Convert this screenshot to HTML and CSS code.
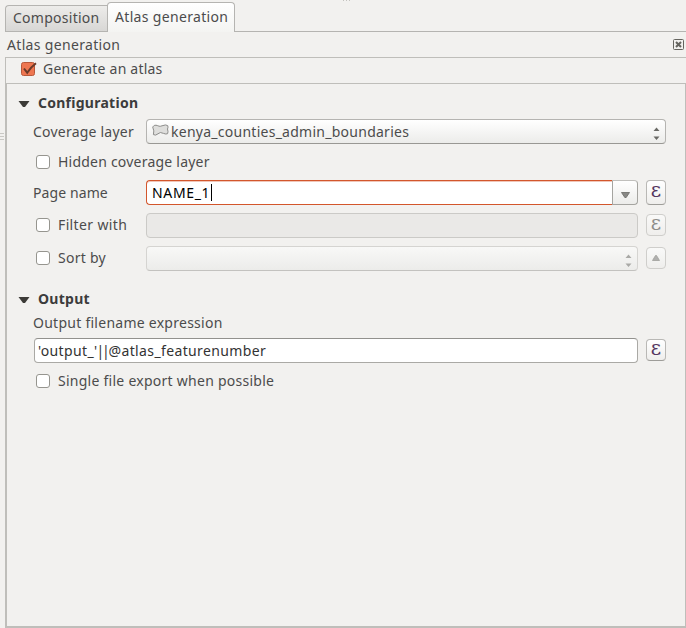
FILE: index.html
```
<!DOCTYPE html>
<html lang="en">
<head>
<meta charset="utf-8">
<title>Atlas generation</title>
<link rel="stylesheet" href="styles.css">
</head>
<body>
<div class="window">
  <i class="grip grip-top"></i>
  <i class="grip grip-left"></i>
  <nav class="tabs">
    <div class="tab"><span>Composition</span></div>
    <div class="tab active"><span class="t-atlas">Atlas generation</span></div>
  </nav>
  <header class="dock-title">
    <span class="t-atlas">Atlas generation</span>
    <svg class="close" width="11" height="11" viewBox="0 0 11 11"><rect x=".5" y=".5" width="10" height="10" rx="1" fill="none" stroke="#65645f"/><path d="M3 3l5 5M8 3l-5 5" stroke="#65645f" stroke-width="2"/></svg>
  </header>
  <div class="generate">
    <svg width="17" height="16" viewBox="0 0 17 16"><rect x="1.5" y="1.5" width="13" height="13" rx="2" fill="#ee7650" stroke="#b8583a"/><path d="M4 7.5l3.2 4.2Q10.5 6.5 16 2.3" fill="none" stroke="#6b3a29" stroke-width="2"/></svg>
    <span class="t-gen">Generate an atlas</span>
  </div>
  <main class="panel">
    <h2><svg width="12" height="8" viewBox="0 0 12 8"><path d="M.5 1h11L7 7H5z" fill="#3c3b37"/></svg><span>Configuration</span></h2>
    <div class="row coverage">
      <label class="t-cov">Coverage layer</label>
      <div class="combo">
        <svg class="poly" width="17" height="13" viewBox="0 0 17 13"><path d="M.7 3Q2 .8 4 1.2C7 1.8 7 3 10 1.8Q14 .2 15.7 1.6Q16.5 3 15.5 5Q16.5 8 15.6 9.7Q14 10.5 11.5 9.4Q8 7.4 6 9.8Q3.5 12 1.4 10.6Q2.6 7 .7 3z" fill="#dededc" stroke="#8d8d8b"/></svg>
        <span>kenya_counties_admin_boundaries</span>
        <svg class="spin" width="7" height="13" viewBox="0 0 7 13"><path d="M.5 4L3.5.5l3 3.5zM.5 9.5h6L3.5 13z" fill="#696965"/></svg>
      </div>
    </div>
    <div class="check hidden-layer"><i class="box"></i><span class="t-hidden">Hidden coverage layer</span></div>
    <div class="row page">
      <label class="t-page">Page name</label>
      <div class="edit-combo">
        <div class="entry"><span class="t-name">NAME_1</span><i class="caret"></i></div>
        <div class="drop"><svg width="9" height="6" viewBox="0 0 9 6"><path d="M.5.5h8L5.2 5.5H3.8z" fill="#888885" stroke="#696965" stroke-width=".8"/></svg></div>
      </div>
      <div class="button tall"><span class="eps">ε</span></div>
    </div>
    <div class="row filter">
      <div class="check"><i class="box"></i><span class="t-filter">Filter with</span></div>
      <div class="input off"></div>
      <div class="button off"><span class="eps">ε</span></div>
    </div>
    <div class="row sort">
      <div class="check"><i class="box"></i><span>Sort by</span></div>
      <div class="combo off"><svg class="spin" width="7" height="13" viewBox="0 0 7 13"><path d="M.5 4L3.5.5l3 3.5zM.5 9.5h6L3.5 13z" fill="#a9a9a6"/></svg></div>
      <div class="button off"><svg width="8" height="6" viewBox="0 0 8 6"><path d="M.5 5.5L3.5.5h1l3 5z" fill="#b0b0ae" stroke="#a09f9c" stroke-width=".8"/></svg></div>
    </div>
    <h2 class="output"><svg width="12" height="8" viewBox="0 0 12 8"><path d="M.5 1h11L7 7H5z" fill="#3c3b37"/></svg><span>Output</span></h2>
    <div class="caption">Output filename expression</div>
    <div class="row filename">
      <div class="input"><span class="t-file">'output_'<span class="pipes">||</span>@atlas_featurenumber</span></div>
      <div class="button"><span class="eps">ε</span></div>
    </div>
    <div class="check single"><i class="box"></i><span>Single file export when possible</span></div>
  </main>
</div>
</body>
</html>
```
FILE: styles.css
```
* { box-sizing: border-box; }
body {
  margin: 0;
  background: #f2f1ef;
  color: #4c4c4c;
  font: 14px/20px "Noto Sans", sans-serif;
  letter-spacing: .26px;
  white-space: nowrap;
}
.window { position: relative; width: 686px; height: 628px; overflow: hidden; }
svg { display: block; flex: none; }
.grip { position: absolute; }
.grip-top { left: 343px; top: 0; width: 8px; height: 1px; background: repeating-linear-gradient(90deg, #c4c3bf 0 1px, transparent 1px 3px); }
.grip-left { left: 0; top: 133px; width: 4px; height: 7px; background: repeating-linear-gradient(#c9c8c4 0 1px, transparent 1px 3px); }

.t-atlas { letter-spacing: .33px; }
.t-gen, .t-cov, .t-hidden { letter-spacing: .22px; }
.t-page { letter-spacing: .1px; }
.t-name { letter-spacing: .65px; }
.t-filter { letter-spacing: .36px; }
.t-file { letter-spacing: .37px; }
.pipes { letter-spacing: -2.3px; margin: 0 1.2px 0 -1px; }

.tabs { display: flex; align-items: flex-end; height: 32px; padding-left: 5px; background: linear-gradient(#b5b4b1, #b5b4b1) 5px 31px / 100% 1px no-repeat; }
.tab { width: 103px; height: 27px; padding: 2px 0 0 7px; border: 1px solid #b5b4b1; border-right: 0; border-radius: 4px 0 0 0; background: linear-gradient(#edecea, #d8d7d5); }
.tab.active { width: 128px; height: 30px; margin-left: -1px; padding: 4px 0 0 7px; border-right: 1px solid #b5b4b1; border-bottom: 0; border-radius: 4px 4px 0 0; background: linear-gradient(#fff, #f4f4f2); }
.dock-title { display: flex; justify-content: space-between; align-items: center; height: 25px; padding: 1px 2px 0 7px; }
.close { margin-top: -1px; }
.generate { display: flex; align-items: center; gap: 6px; height: 26px; margin-left: 5px; padding: 0 0 3px 14px; border-top: 1px solid #bfbeba; border-left: 1px solid #bfbeba; }

.panel { height: 545px; margin-left: 5px; padding: 9px 19px 0 0; border: solid #bfbeba; border-width: 1px 1px 2px 2px; }
h2 { display: flex; align-items: center; gap: 8px; height: 20px; margin: 0; padding-left: 11px; color: #3c3c3c; font-size: 14px; line-height: 20px; }
h2 svg { margin-top: 2px; }
.row { display: flex; align-items: center; height: 25px; margin-top: 8px; padding-left: 26px; }
.row > label, .row > .check { flex: none; width: 113px; }
.coverage { margin-top: 6px; }
.page { margin-top: 9px; }
.check { display: flex; align-items: center; gap: 8px; height: 18px; padding-left: 3px; }
.row > .check { margin-bottom: 2px; }
.hidden-layer, .single { margin-top: 9px; padding-left: 29px; }
.box { flex: none; width: 14px; height: 14px; border: 1px solid #96958f; border-radius: 3px; background: #fff; }

.combo, .input, .edit-combo { flex: 1; display: flex; align-items: center; height: 25px; border-radius: 4px; }
.combo { padding: 0 5px 0 5px; border: 1px solid #b5b4b1; border-bottom-color: #999894; background: linear-gradient(#fff, #ececea); }
.poly { margin: -2px 2px 0 0; }
.spin { margin: 4px 0 0 auto; }
.combo.off { border-color: #d5d4d1; border-bottom-color: #c3c2bf; background: linear-gradient(#f8f8f7, #ececea); }
.input { padding-left: 3px; border: 1px solid #aaa9a5; border-top-color: #92918d; background: #fff; color: #333; }
.input.off { border-color: #cbcac7; background: #eae9e7; }
.entry { flex: 1; display: flex; align-items: center; height: 25px; padding-left: 5px; border: 1px solid #d3562c; border-right: 0; border-radius: 4px 0 0 4px; box-shadow: inset 0 1px #f0c6b8; background: #fff; color: #000; }
.caret { width: 1px; height: 17px; margin-left: 1px; background: #000; }
.drop { display: flex; align-items: center; justify-content: center; width: 26px; height: 25px; padding: 4px 0 0 1px; border: 1px solid #a5a4a0; border-top-color: #c0bfbc; border-radius: 0 4px 4px 0; background: linear-gradient(#fff, #ececea); }
.button { display: flex; align-items: center; justify-content: center; flex: none; width: 20px; height: 22px; margin: 0 0 1px 8px; border: 1px solid #b9b8b5; border-bottom-color: #9e9d99; border-radius: 4px; background: linear-gradient(#fff, #efeeec); }
.button.tall { height: 25px; margin-bottom: 0; }
.button.off { border-color: #cfcecb; background: linear-gradient(#f9f9f8, #efeeec); }
.eps { color: #533660; font: 20px/18px "DejaVu Serif", serif; letter-spacing: 0; margin-top: -5px; }
.off .eps { color: #8e8d8a; }
.output { margin-top: 18px; }
.caption { height: 20px; margin-top: 4px; padding-left: 26px; }
.filename { margin-top: 5px; padding-left: 27px; }
```
